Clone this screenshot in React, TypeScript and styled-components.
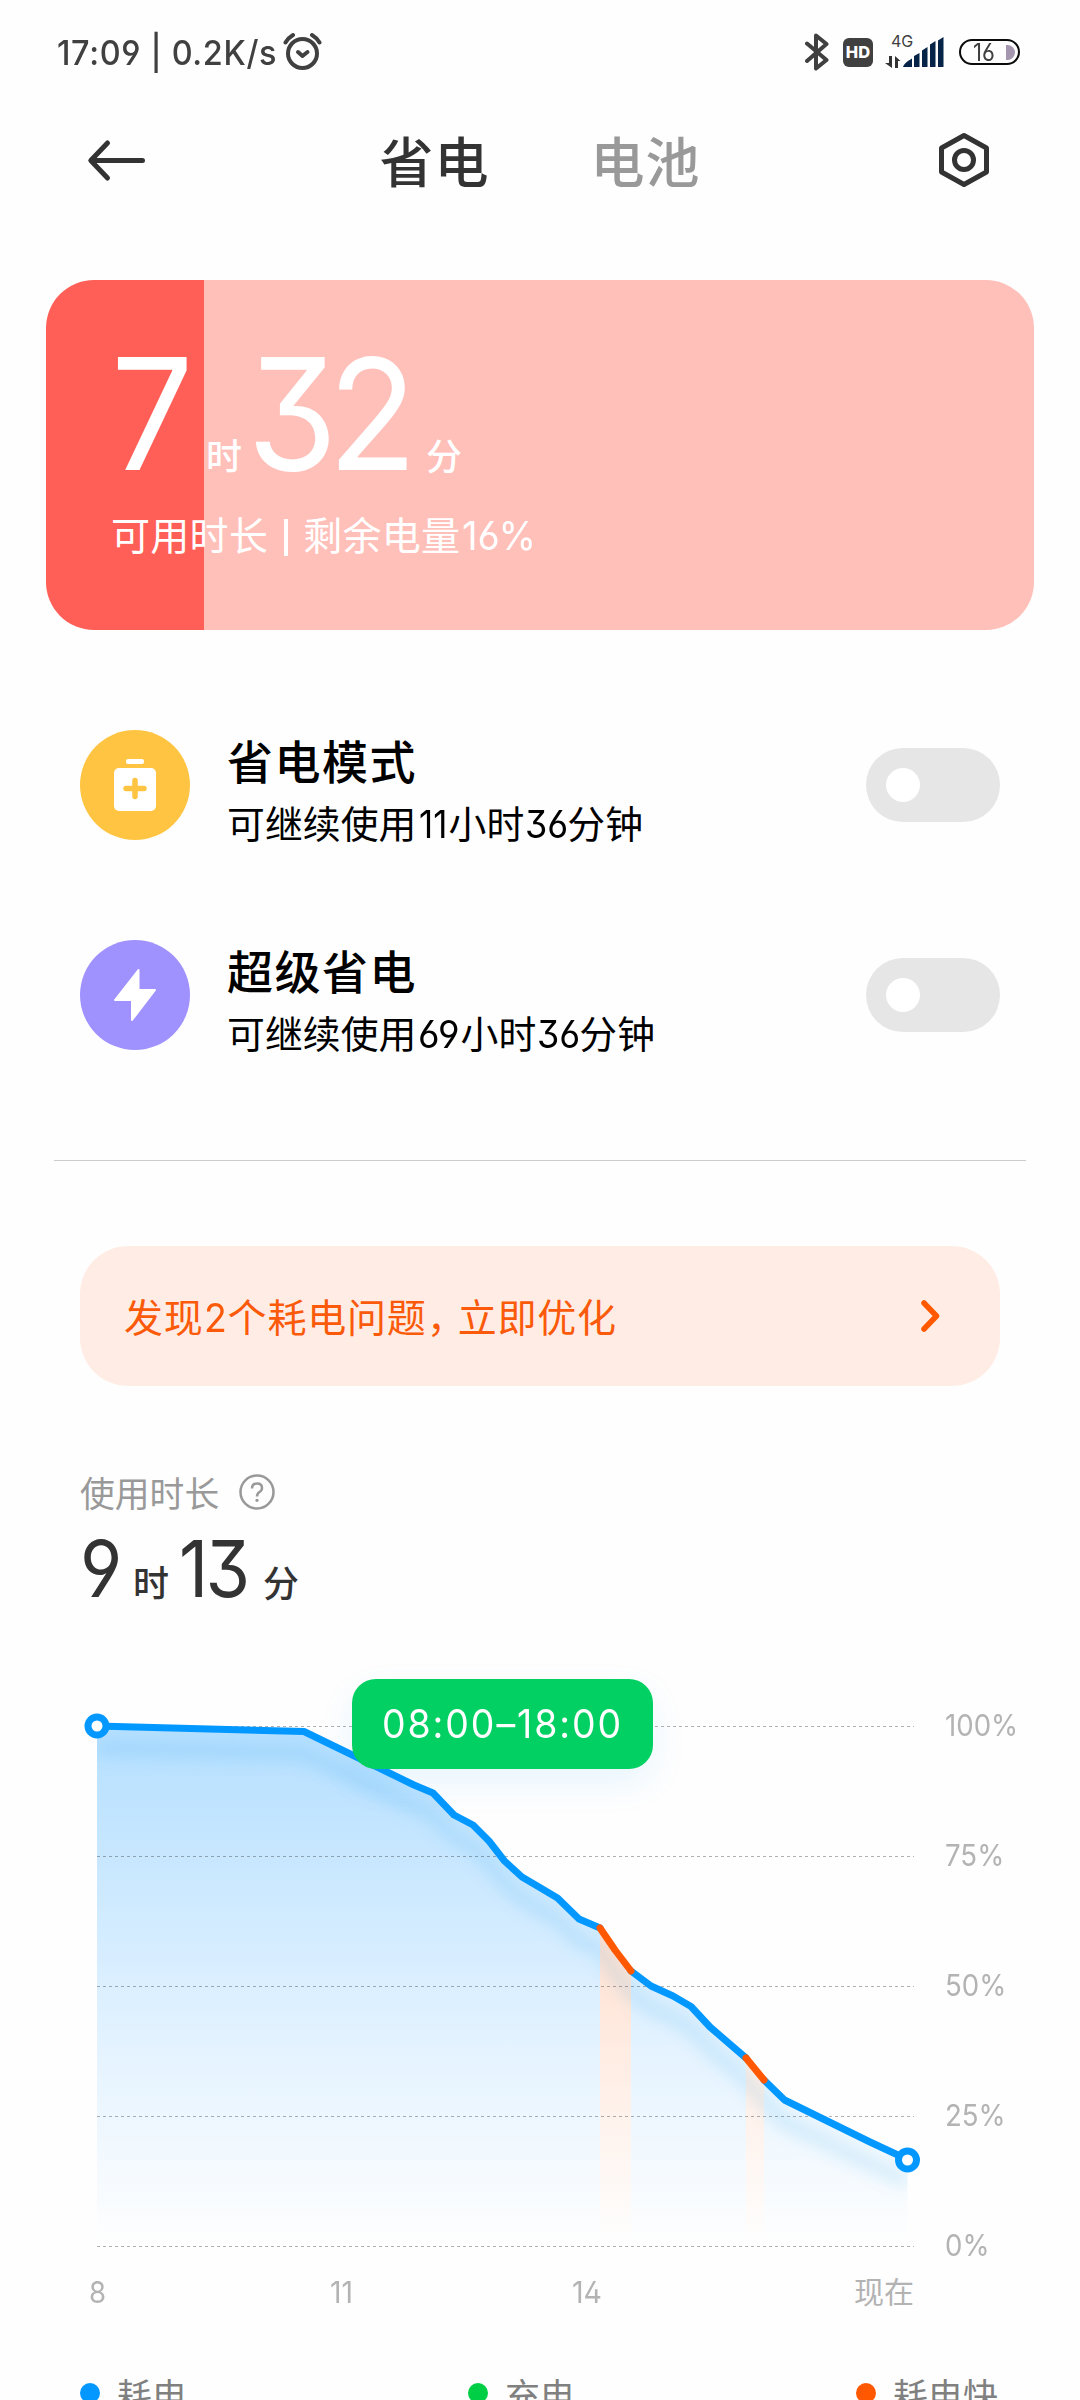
import React from "react";
import styled, { createGlobalStyle } from "styled-components";

const Global = createGlobalStyle`
  * { box-sizing: border-box; }
  body { margin: 0; background: #fdfdfd; }
`;

const latin = `"Inter", "Noto Sans", "Noto Sans CJK SC", sans-serif`;
const han = `"Noto Sans CJK SC", "Noto Sans", sans-serif`;

const Screen = styled.main`
  width: 1080px;
  height: 2400px;
  overflow: hidden;
  display: flex;
  flex-direction: column;
  background: #fefefe;
  color: #333;
  font-family: ${han};
  & > * { flex: none; }
`;

/* Digits and Latin runs, condensed to a fixed advance. */
const Digits = styled.span<{ $w: number; $scale: number; $weight?: number; $track?: number; $lead?: number }>`
  display: inline-block;
  width: ${(p) => p.$w}px;
  margin-left: ${(p) => p.$lead ?? 0}px;
  white-space: pre;
  letter-spacing: ${(p) => p.$track ?? 0}px;
  font-family: ${latin};
  font-weight: ${(p) => p.$weight ?? 400};
  font-feature-settings: "cv03", "cv04", "cv09", "ss01";
  transform: scaleX(${(p) => p.$scale});
  transform-origin: 0 50%;
`;

const StatusBar = styled.header`
  height: 104px;
  padding: 0 60px 0 57px;
  display: flex;
  align-items: center;
  justify-content: space-between;
`;

const StatusSide = styled.div`
  display: flex;
  align-items: center;
`;

const Clock = styled.div`
  font-size: 34.5px;
  line-height: 40px;
  color: #404040;
  margin: 0 7px 2px 0;
`;

const StatusIcon = styled.svg`
  display: block;
`;

const HdBadge = styled.div`
  width: 30px;
  height: 29px;
  margin-left: 14px;
  border-radius: 6px;
  background: #404040;
  color: #fff;
  display: flex;
  align-items: center;
  justify-content: center;
  font: 800 16.5px/1 ${latin};
`;

const Signal = styled.div`
  width: 61px;
  height: 32px;
  margin-left: 12px;
  display: grid;
  grid-template: 32px / 61px;
  & > * { grid-area: 1 / 1; }
`;

const Network = styled.span`
  padding-left: 6px;
  font: 400 16px/11px ${latin};
  color: #404040;
`;

const Battery = styled.div`
  width: 61px;
  height: 26px;
  margin-left: 13px;
  padding: 2px 3px 0 12px;
  border: 2.5px solid #0b0b0b;
  border-radius: 13px;
  display: flex;
  align-items: center;
  justify-content: space-between;
  font-size: 24px;
  line-height: 24px;
  color: #404040;
`;

const BatteryTip = styled.i`
  width: 9px;
  height: 15px;
  margin-bottom: 2px;
  border-radius: 0 8px 8px 0;
  background: #a596b0;
`;

const TitleBar = styled.nav`
  height: 112px;
  padding: 0 91px 0 87px;
  display: flex;
  align-items: center;
  justify-content: space-between;
`;

const Tabs = styled.div`
  display: flex;
  gap: 101px;
  margin: 0 3px 1px -3px;
`;

const Tab = styled.span<{ $on?: boolean }>`
  font-size: 54px;
  line-height: 80px;
  letter-spacing: 1px;
  font-weight: 500;
  color: ${(p) => (p.$on ? "#333" : "#999")};
`;

const RemainCard = styled.section`
  height: 350px;
  margin: 64px 46px 0;
  padding: 61px 0 0 65px;
  border-radius: 48px;
  color: #fff;
  background: linear-gradient(to right, #ff5f57 158px, #ffc0ba 158px);
`;

const Duration = styled.div<{ $size: number; $h: number }>`
  height: ${(p) => p.$h}px;
  line-height: ${(p) => p.$h}px;
  font-size: ${(p) => p.$size}px;
  display: flex;
  align-items: baseline;
`;

const Unit = styled.span<{ $gap: number }>`
  font-size: 36px;
  font-weight: 500;
  width: 36px;
  margin: 0 ${(p) => p.$gap}px 0 0;
`;

const RemainNote = styled.div`
  margin-top: 19px;
  font-size: 39px;
  line-height: 56px;
  letter-spacing: 0.3px;
  white-space: nowrap;
`;

const Bar = styled.i`
  display: inline-block;
  width: 4px;
  height: 37px;
  margin: 0 15px 0 16px;
  vertical-align: -6px;
  background: currentColor;
`;

const ModeList = styled.section`
  height: 531px;
  margin: 0 54px;
  padding: 70px 26px 0;
  border-bottom: 1px solid #ccc;
  display: flex;
  flex-direction: column;
  gap: 10px;
`;

const ModeRow = styled.div`
  height: 200px;
  display: flex;
  align-items: center;
  padding-bottom: 30px;
`;

const ModeIcon = styled.div<{ $bg: string }>`
  width: 110px;
  height: 110px;
  border-radius: 50%;
  background: ${(p) => p.$bg};
  display: flex;
  align-items: center;
  justify-content: center;
`;

const ModeText = styled.div`
  flex: 1;
  margin-left: 37px;
  padding-top: 11px;
  color: #000;
`;

const ModeTitle = styled.div`
  font-size: 46px;
  line-height: 64px;
  letter-spacing: 1.5px;
  font-weight: 500;
`;

const ModeNote = styled.div`
  font-size: 37.8px;
  line-height: 62px;
  letter-spacing: 0.1px;
  white-space: nowrap;
`;

const Toggle = styled.div`
  width: 134px;
  height: 74px;
  padding: 20px;
  border-radius: 37px;
  background: #e6e6e6;
`;

const Knob = styled.div`
  width: 34px;
  height: 34px;
  border-radius: 50%;
  background: #fff;
`;

const Notice = styled.section`
  height: 140px;
  margin: 85px 80px 0;
  padding: 0 60px 0 44px;
  border-radius: 48px;
  background: #ffede5;
  color: #fa5a0a;
  display: flex;
  align-items: center;
  justify-content: space-between;
  font-size: 39px;
  letter-spacing: 0.8px;
`;

const NoticeText = styled.span`
  padding-bottom: 3px;
`;

const Comma = styled.span`
  letter-spacing: -8px;
`;

const Usage = styled.section`
  padding: 83px 80px 0;
`;

const UsageLabel = styled.div`
  height: 46px;
  display: flex;
  align-items: center;
  gap: 20px;
  font-size: 34.8px;
  color: #999;
`;

const Chart = styled.section`
  height: 660px;
  margin-top: 54px;
  position: relative;
  display: grid;
  grid-template-columns: 945px 135px;
  grid-template-rows: 600px 60px;
`;

const Plot = styled.svg`
  display: block;
`;

const YAxis = styled.div`
  padding-top: 24px;
  display: flex;
  flex-direction: column;
`;

const YLabel = styled.span`
  flex: none;
  height: 130px;
  line-height: 46px;
  font-size: 30px;
  color: #b3b3b3;
  &:last-child { height: 46px; }
`;

const XAxis = styled.div`
  margin-top: -4px;
  padding-left: 89px;
  display: flex;
  font-size: 30px;
  line-height: 36px;
  color: #b3b3b3;
`;

const XLabel = styled.span<{ $w: number }>`
  width: ${(p) => p.$w}px;
  flex: none;
`;

const Tooltip = styled.div`
  position: absolute;
  left: 352px;
  top: 3px;
  width: 301px;
  height: 90px;
  padding-left: 30px;
  border-radius: 24px;
  background: #03d062;
  box-shadow: 0 14px 36px rgba(0, 150, 255, 0.09);
  color: #fff;
  font-size: 39px;
  line-height: 84px;
`;

const Legend = styled.footer`
  padding: 29px 82px 0 80px;
  display: flex;
  justify-content: space-between;
`;

const LegendItem = styled.div`
  display: flex;
  align-items: center;
  height: 56px;
  gap: 17px;
  font-size: 35px;
  color: #808080;
`;

const Dot = styled.i<{ $c: string }>`
  width: 20px;
  height: 20px;
  border-radius: 50%;
  background: ${(p) => p.$c};
`;

const TOP = 1676;
const at = (pts: number[][]) => pts.map(([x, y]) => `${x},${y - TOP}`).join(" ");

const first = [
  [97, 1726], [304, 1731.5], [414, 1785], [433, 1793], [454, 1815], [473, 1825],
  [489, 1841], [504.5, 1861], [522, 1877], [539, 1887], [557.5, 1898], [579, 1919], [600, 1928],
];
const fastA = [[600, 1928], [615, 1950], [631, 1971]];
const second = [
  [631, 1971], [651, 1986], [673, 1996], [691, 2006.5], [710, 2027], [746, 2058],
];
const fastB = [[746, 2058], [764, 2080]];
const third = [[764, 2080], [784.5, 2100], [870, 2142], [907.5, 2159.5]];
const all = [...first, ...fastA.slice(1), ...second.slice(1), ...fastB.slice(1), ...third.slice(1)];

const area = (pts: number[][]) =>
  `${at(pts)} ${pts[pts.length - 1][0]},570 ${pts[0][0]},570`;

function BatteryChart() {
  return (
    <Chart>
      <Plot width="945" height="600" viewBox="0 0 945 600" fill="none">
        <defs>
          <linearGradient id="blue" gradientUnits="userSpaceOnUse" x1="0" y1="50" x2="0" y2="565">
            <stop offset="0" stopColor="#b4dfff" />
            <stop offset="0.5" stopColor="#dbefff" />
            <stop offset="1" stopColor="#fefefe" />
          </linearGradient>
          <linearGradient id="orange" gradientUnits="userSpaceOnUse" x1="0" y1="250" x2="0" y2="565">
            <stop offset="0" stopColor="#ffe0d0" />
            <stop offset="1" stopColor="#fefefe" />
          </linearGradient>
          <filter id="soft" x="-10%" y="-10%" width="120%" height="130%">
            <feGaussianBlur stdDeviation="8" />
          </filter>
          <clipPath id="under">
            <polygon points={area(all)} />
          </clipPath>
        </defs>
        <polygon points={area(all)} fill="url(#blue)" />
        <polygon points={area(fastA)} fill="url(#orange)" />
        <polygon points={area(fastB)} fill="url(#orange)" />
        <g clipPath="url(#under)">
          <polyline
            points={at(all)}
            transform="translate(0 22)"
            stroke="#1a94dc"
            strokeOpacity="0.15"
            strokeWidth="12"
            filter="url(#soft)"
          />
        </g>
        {[0, 1, 2, 3, 4].map((i) => (
          <line
            key={i}
            x1="97"
            x2="914"
            y1={50.5 + i * 130}
            y2={50.5 + i * 130}
            stroke="#000"
            strokeOpacity="0.3"
            strokeDasharray="3 3"
          />
        ))}
        <g strokeWidth="7" strokeLinejoin="round" strokeLinecap="round">
          <polyline points={at(first)} stroke="#0398ff" />
          <polyline points={at(second)} stroke="#0398ff" />
          <polyline points={at(third)} stroke="#0398ff" />
          <polyline points={at(fastA)} stroke="#ff5800" />
          <polyline points={at(fastB)} stroke="#ff5800" />
        </g>
        <circle cx="97" cy="50" r="9" fill="#fff" stroke="#0398ff" strokeWidth="7" />
        <circle cx="907.5" cy="484" r="9" fill="#fff" stroke="#0398ff" strokeWidth="7" />
      </Plot>
      <YAxis>
        {["100%", "75%", "50%", "25%", "0%"].map((t) => (
          <YLabel key={t}>
            <Digits $w={80} $scale={0.92}>{t}</Digits>
          </YLabel>
        ))}
      </YAxis>
      <XAxis>
        <XLabel $w={241}><Digits $w={20} $scale={0.92}>8</Digits></XLabel>
        <XLabel $w={242}><Digits $w={30} $scale={0.94}>11</Digits></XLabel>
        <XLabel $w={282}><Digits $w={36} $scale={0.95}>14</Digits></XLabel>
        <XLabel $w={64}>现在</XLabel>
      </XAxis>
      <Tooltip>
        <Digits $w={240} $scale={0.96} $track={2}>08:00–18:00</Digits>
      </Tooltip>
    </Chart>
  );
}

function StatusRow() {
  return (
    <StatusBar>
      <StatusSide>
        <Clock><Digits $w={219} $scale={0.94} $track={0.7} $weight={500}>17:09 | 0.2K/s</Digits></Clock>
        <StatusIcon width="40" height="40" viewBox="0 0 40 40" fill="none" stroke="#404040" strokeWidth="4" strokeLinecap="round">
          <circle cx="19.5" cy="21.5" r="14.5" />
          <path d="M2.5 10.5Q5 6 10 3M36.5 10.5Q34 6 29 3" />
          <path d="M15 20l4.500 4 5-4" strokeLinejoin="round" />
        </StatusIcon>
      </StatusSide>
      <StatusSide>
        <StatusIcon width="24" height="40" viewBox="0 0 24 40" fill="none" stroke="#404040" strokeWidth="4" strokeLinecap="round" strokeLinejoin="round">
          <path d="M2 11.500L21.500 28 11 36.500V3.500L21.500 12 2 29" />
        </StatusIcon>
        <HdBadge>HD</HdBadge>
        <Signal>
          <svg width="61" height="32" viewBox="0 0 61 32">
            <path d="M0 27h4v-7h3v12L0 27zM15.500 25H13v7h-3V20z" fill="#333" />
            <path d="M18 31q1-4 9-8.500V31zM29 20l5.500-3v14H29zM37 14.500l5.500-3.500v20H37zM45 8.500L50.500 5v26H45zM53 4.500L58.500 1v30H53z" fill="#062447" />
          </svg>
          <Network>4G</Network>
        </Signal>
        <Battery>
          <Digits $w={24} $scale={0.92}>16</Digits>
          <BatteryTip />
        </Battery>
      </StatusSide>
    </StatusBar>
  );
}

export default function App() {
  return (
    <>
      <Global />
      <Screen>
        <StatusRow />
        <TitleBar>
          <svg width="60" height="44" viewBox="0 0 60 44" fill="none" stroke="#333" strokeWidth="5" strokeLinecap="round" strokeLinejoin="round">
            <path d="M55.500 22.500H4M20.500 5L3.800 22.500 20.500 40" />
          </svg>
          <Tabs>
            <Tab $on>省电</Tab>
            <Tab>电池</Tab>
          </Tabs>
          <svg width="50" height="56" viewBox="0 0 50 56" fill="none" stroke="#333" strokeWidth="5" strokeLinejoin="round">
            <path d="M25 3.500L47.500 16V40L25 52.500 2.500 40V16z" />
            <circle cx="25" cy="28" r="9.500" />
          </svg>
        </TitleBar>

        <RemainCard>
          <Duration $size={155} $h={145}>
            <Digits $w={95} $scale={0.94}>7</Digits>
            <Unit $gap={9}>时</Unit>
            <Digits $w={179} $scale={0.94} $track={-10} $lead={-4}>32</Digits>
            <Unit $gap={0}>分</Unit>
          </Duration>
          <RemainNote>
            可用时长<Bar />剩余电量<Digits $w={76} $scale={0.98} $lead={2}>16%</Digits>
          </RemainNote>
        </RemainCard>

        <ModeList>
          <ModeRow>
            <ModeIcon $bg="#ffc542">
              <svg width="42" height="52" viewBox="0 0 42 52">
                <rect x="12" width="18" height="5" rx="2" fill="#fff" />
                <rect y="9" width="42" height="43" rx="5" fill="#fff" />
                <path d="M21 21.500v16M12 29.500h18" stroke="#ffc542" strokeWidth="5.500" strokeLinecap="round" />
              </svg>
            </ModeIcon>
            <ModeText>
              <ModeTitle>省电模式</ModeTitle>
              <ModeNote>
                可继续使用<Digits $w={30} $scale={0.92} $lead={2}>11</Digits>小时<Digits $w={42} $scale={0.95} $lead={1}>36</Digits>分钟
              </ModeNote>
            </ModeText>
            <Toggle><Knob /></Toggle>
          </ModeRow>
          <ModeRow>
            <ModeIcon $bg="#9f92ff">
              <svg width="42" height="52" viewBox="0 0 42 52" fill="#fff" stroke="#fff" strokeWidth="2" strokeLinejoin="round">
                <path d="M24.500 1V21H41L18 51V31H1z" />
              </svg>
            </ModeIcon>
            <ModeText>
              <ModeTitle>超级省电</ModeTitle>
              <ModeNote>
                可继续使用<Digits $w={43} $scale={0.98} $lead={1}>69</Digits>小时<Digits $w={42} $scale={0.95} $lead={1}>36</Digits>分钟
              </ModeNote>
            </ModeText>
            <Toggle><Knob /></Toggle>
          </ModeRow>
        </ModeList>

        <Notice>
          <NoticeText>
            发现<Digits $w={24} $scale={0.96}>2</Digits>个耗电问题<Comma>，</Comma>立即优化
          </NoticeText>
          <svg width="20" height="34" viewBox="0 0 20 34" fill="none" stroke="#ff5800" strokeWidth="5.500" strokeLinecap="round" strokeLinejoin="round">
            <path d="M4 4l12.500 13L4 30" />
          </svg>
        </Notice>

        <Usage>
          <UsageLabel>
            使用时长
            <svg width="36" height="36" viewBox="0 0 36 36" fill="none" stroke="#999" strokeWidth="2.500">
              <circle cx="18" cy="18" r="16.500" />
              <path d="M13 14.500q0-5 5-5t5 4.500q0 2.500-2.500 4-2.500 1.700-2.500 4.500" />
              <circle cx="18" cy="26.300" r="1.600" fill="#999" stroke="none" />
            </svg>
          </UsageLabel>
          <Duration $size={79} $h={107}>
            <Digits $w={53} $scale={0.92} $weight={430}>9</Digits>
            <Unit $gap={10}>时</Unit>
            <Digits $w={84} $scale={0.91} $track={-3} $weight={430}>13</Digits>
            <Unit $gap={0}>分</Unit>
          </Duration>
        </Usage>

        <BatteryChart />

        <Legend>
          <LegendItem><Dot $c="#0398ff" />耗电</LegendItem>
          <LegendItem><Dot $c="#00cf46" />充电</LegendItem>
          <LegendItem><Dot $c="#ff5800" />耗电快</LegendItem>
        </Legend>
      </Screen>
    </>
  );
}
